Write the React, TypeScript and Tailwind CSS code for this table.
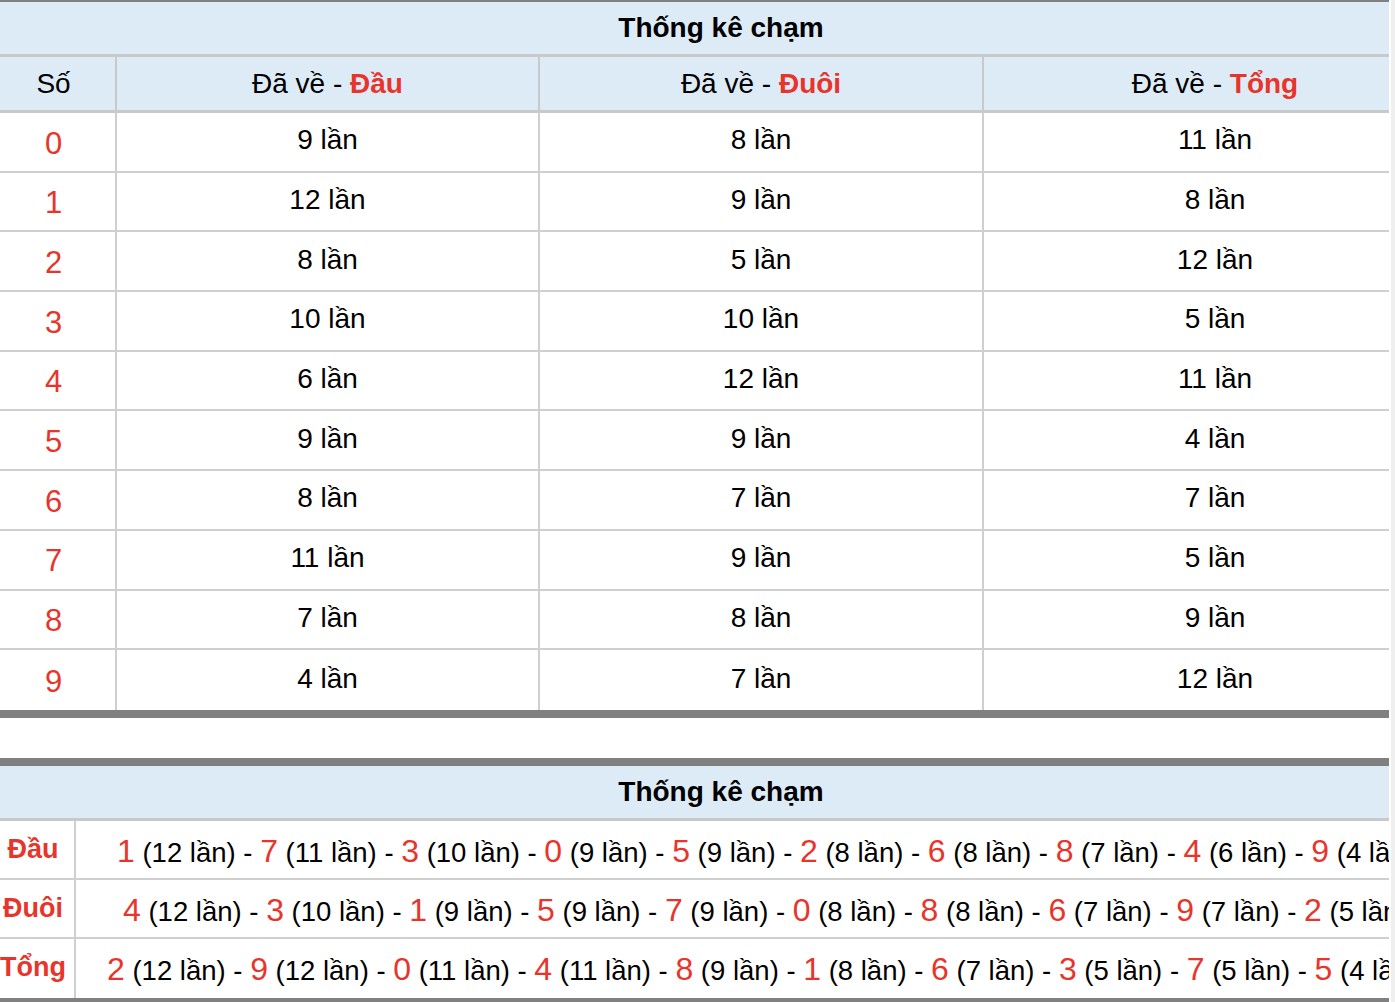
import React from "react";

const RED = "text-[#e8352b]";

const rows1: [string, string, string, string][] = [
  ["0", "9", "8", "11"],
  ["1", "12", "9", "8"],
  ["2", "8", "5", "12"],
  ["3", "10", "10", "5"],
  ["4", "6", "12", "11"],
  ["5", "9", "9", "4"],
  ["6", "8", "7", "7"],
  ["7", "11", "9", "5"],
  ["8", "7", "8", "9"],
  ["9", "4", "7", "12"],
];

const rows2: { label: string; pad: string; items: [string, string][] }[] = [
  {
    label: "Đầu",
    pad: "pl-[41px]",
    items: [
      ["1", "12"], ["7", "11"], ["3", "10"], ["0", "9"], ["5", "9"],
      ["2", "8"], ["6", "8"], ["8", "7"], ["4", "6"], ["9", "4"],
    ],
  },
  {
    label: "Đuôi",
    pad: "pl-[47px]",
    items: [
      ["4", "12"], ["3", "10"], ["1", "9"], ["5", "9"], ["7", "9"],
      ["0", "8"], ["8", "8"], ["6", "7"], ["9", "7"], ["2", "5"],
    ],
  },
  {
    label: "Tổng",
    pad: "pl-[31px]",
    items: [
      ["2", "12"], ["9", "12"], ["0", "11"], ["4", "11"], ["8", "9"],
      ["1", "8"], ["6", "7"], ["3", "5"], ["7", "5"], ["5", "4"],
    ],
  },
];

function Header({ label }: { label: string }) {
  return (
    <span>
      Đã về - <span className={`font-bold ${RED}`}>{label}</span>
    </span>
  );
}

export default function App() {
  return (
    <div
      className="flex bg-white w-[1395px] h-[1002px] overflow-hidden text-black"
      style={{ fontFamily: '"Liberation Sans", Arial, Helvetica, sans-serif' }}
    >
      <div className="w-[1389px] shrink-0 overflow-hidden">
        <div className="w-[1442px]">
          {/* Table 1 */}
          <div className="border-t-2 border-[#808080]">
            <div className="h-[52px] bg-[#ddebf7] flex items-center justify-center text-[28px] font-bold">
              Thống kê chạm
            </div>
            <div className="h-[3px] bg-[#c9c9c9]" />
            <div className="h-[53px] bg-[#ddebf7] flex text-[28px]">
              <div className="w-[115px] flex items-center justify-center pr-[8px]">Số</div>
              <div className="w-[2px] bg-[#c9c9c9]" />
              <div className="w-[421px] flex items-center justify-center">
                <Header label="Đầu" />
              </div>
              <div className="w-[2px] bg-[#c9c9c9]" />
              <div className="w-[442px] flex items-center justify-center">
                <Header label="Đuôi" />
              </div>
              <div className="w-[2px] bg-[#c9c9c9]" />
              <div className="w-[458px] flex items-center justify-center pl-[4px]">
                <Header label="Tổng" />
              </div>
            </div>
            <div className="h-[3px] bg-[#c9c9c9]" />
            {rows1.map((r, i) => (
              <div
                key={r[0]}
                className={`flex h-[59.7px] text-[28px] ${i < 9 ? "border-b-2 border-[#cfcfcf]" : ""}`}
              >
                <div className={`w-[115px] flex items-center justify-center text-[31px] pt-[4px] pr-[8px] ${RED}`}>
                  {r[0]}
                </div>
                <div className="w-[2px] bg-[#cfcfcf]" />
                <div className="w-[421px] flex items-center justify-center pb-[3px]">{r[1]} lần</div>
                <div className="w-[2px] bg-[#cfcfcf]" />
                <div className="w-[442px] flex items-center justify-center pb-[3px]">{r[2]} lần</div>
                <div className="w-[2px] bg-[#cfcfcf]" />
                <div className="w-[458px] flex items-center justify-center pb-[3px] pl-[4px]">{r[3]} lần</div>
              </div>
            ))}
            <div className="h-[8px] bg-[#808080]" />
          </div>

          <div className="h-[40px]" />

          {/* Table 2 */}
          <div className="border-t-[8px] border-[#808080]">
            <div className="h-[52px] bg-[#ddebf7] flex items-center justify-center text-[28px] font-bold">
              Thống kê chạm
            </div>
            <div className="h-[3px] bg-[#c9c9c9]" />
            {rows2.map((r, i) => (
              <div
                key={r.label}
                className={`flex h-[59px] ${i < 2 ? "border-b-2 border-[#cfcfcf]" : ""}`}
              >
                <div
                  className={`w-[74px] shrink-0 flex justify-center pr-[8px] pt-[8px] text-[27px] font-bold ${RED}`}
                >
                  {r.label}
                </div>
                <div className="w-[2px] shrink-0 bg-[#cfcfcf]" />
                <div className={`flex-1 whitespace-nowrap text-[27.5px] leading-[57px] pt-[2px] ${r.pad}`}>
                  {r.items.map(([d, c], j) => (
                    <React.Fragment key={j}>
                      <span className={`text-[32px] ${RED}`}>{d}</span>
                      {` (${c} lần)${j < r.items.length - 1 ? " - " : ""}`}
                    </React.Fragment>
                  ))}
                </div>
              </div>
            ))}
            <div className="h-[8px] bg-[#808080]" />
          </div>
        </div>
      </div>
      <div className="w-[2px] shrink-0 bg-white" />
      <div className="w-[4px] shrink-0 bg-[#efefef]" />
    </div>
  );
}
